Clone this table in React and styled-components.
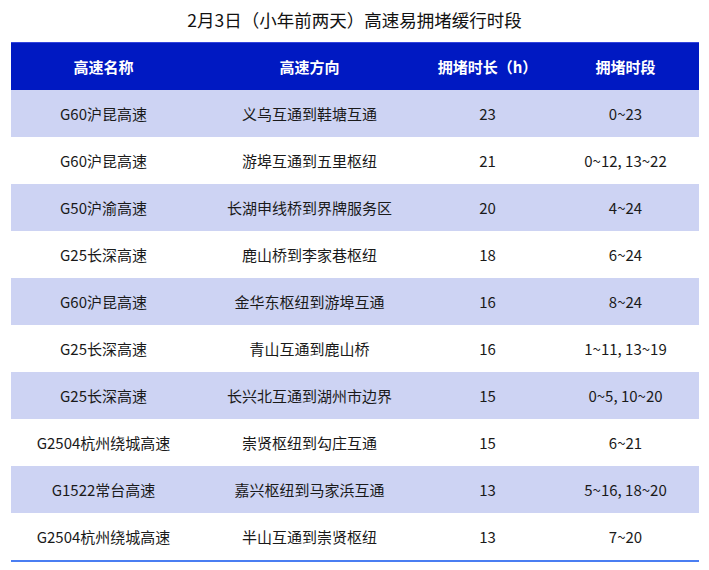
import React from "react";
import styled, { createGlobalStyle } from "styled-components";

const Global = createGlobalStyle`
  html, body { margin: 0; padding: 0; background: #fff; }
  body { font-family: "Noto Sans CJK SC", "Noto Sans", sans-serif; }
`;

const Page = styled.div`
  width: 709px;
  display: flex;
  flex-direction: column;
  align-items: center;
  padding-top: 7px;
`;

const Title = styled.h1`
  margin: 0;
  height: 35px;
  font-size: 17.5px;
  font-weight: 400;
  color: #111;
  line-height: 26px;
  text-align: center;
`;

const Table = styled.div`
  width: 688px;
  display: flex;
  flex-direction: column;
  border-bottom: 2px solid #4a7ef2;
`;

const cols = "186px 226px 130px 146px";

const HeadRow = styled.div`
  display: grid;
  grid-template-columns: ${cols};
  height: 47px;
  background: #0019c2;
  border-top: 1px solid #3344dd;
`;

const Row = styled.div`
  display: grid;
  grid-template-columns: ${cols};
  height: 47px;
  background: ${(p) => (p.$alt ? "#cdd3f3" : "#ffffff")};
`;

const HeadCell = styled.div`
  display: flex;
  align-items: center;
  justify-content: center;
  color: #fff;
  font-weight: 700;
  font-size: 15px;
`;

const Cell = styled.div`
  display: flex;
  align-items: center;
  justify-content: center;
  color: #1a1a1a;
  font-size: 15px;
`;

const data = [
  ["G60沪昆高速", "义乌互通到鞋塘互通", "23", "0~23"],
  ["G60沪昆高速", "游埠互通到五里枢纽", "21", "0~12, 13~22"],
  ["G50沪渝高速", "长湖申线桥到界牌服务区", "20", "4~24"],
  ["G25长深高速", "鹿山桥到李家巷枢纽", "18", "6~24"],
  ["G60沪昆高速", "金华东枢纽到游埠互通", "16", "8~24"],
  ["G25长深高速", "青山互通到鹿山桥", "16", "1~11, 13~19"],
  ["G25长深高速", "长兴北互通到湖州市边界", "15", "0~5, 10~20"],
  ["G2504杭州绕城高速", "崇贤枢纽到勾庄互通", "15", "6~21"],
  ["G1522常台高速", "嘉兴枢纽到马家浜互通", "13", "5~16, 18~20"],
  ["G2504杭州绕城高速", "半山互通到崇贤枢纽", "13", "7~20"],
];

export default function App() {
  return (
    <Page>
      <Global />
      <Title>2月3日（小年前两天）高速易拥堵缓行时段</Title>
      <Table>
        <HeadRow>
          <HeadCell>高速名称</HeadCell>
          <HeadCell>高速方向</HeadCell>
          <HeadCell>拥堵时长（h）</HeadCell>
          <HeadCell>拥堵时段</HeadCell>
        </HeadRow>
        {data.map((r, i) => (
          <Row key={i} $alt={i % 2 === 0}>
            {r.map((c, j) => (
              <Cell key={j}>{c}</Cell>
            ))}
          </Row>
        ))}
      </Table>
    </Page>
  );
}
